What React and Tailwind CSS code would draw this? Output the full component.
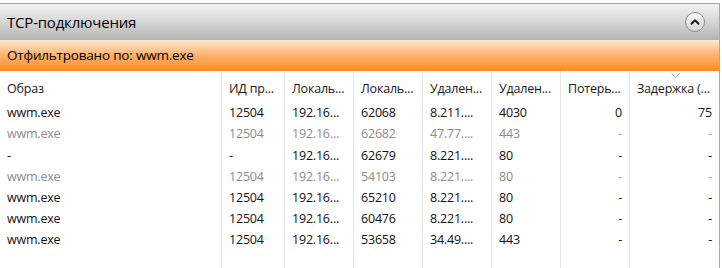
import { ChevronUp } from 'lucide-react';

const cols = [
  { label: 'Образ', w: 'w-[221px]', align: 'text-left' },
  { label: 'ИД пр...', w: 'w-[63px]', align: 'text-left' },
  { label: 'Локаль...', w: 'w-[69px]', align: 'text-left' },
  { label: 'Локаль...', w: 'w-[69px]', align: 'text-left' },
  { label: 'Удален...', w: 'w-[69px]', align: 'text-left' },
  { label: 'Удален...', w: 'w-[69px]', align: 'text-left' },
  { label: 'Потерь...', w: 'w-[69px]', align: 'text-right' },
  { label: 'Задержка (...', w: 'flex-1', align: 'text-right' },
];

const rows = [
  { dim: false, cells: ['wwm.exe', '12504', '192.16...', '62068', '8.211....', '4030', '0', '75'] },
  { dim: true, cells: ['wwm.exe', '12504', '192.16...', '62682', '47.77....', '443', '-', '-'] },
  { dim: false, cells: ['-', '-', '192.16...', '62679', '8.221....', '80', '-', '-'] },
  { dim: true, cells: ['wwm.exe', '12504', '192.16...', '54103', '8.221....', '80', '-', '-'] },
  { dim: false, cells: ['wwm.exe', '12504', '192.16...', '65210', '8.221....', '80', '-', '-'] },
  { dim: false, cells: ['wwm.exe', '12504', '192.16...', '60476', '8.221....', '80', '-', '-'] },
  { dim: false, cells: ['wwm.exe', '12504', '192.16...', '53658', '34.49....', '443', '-', '-'] },
];

export default function App() {
  return (
    <div
      className="w-[722px] h-[268px] bg-white overflow-hidden"
      style={{ fontFamily: '"Open Sans", "Noto Sans", sans-serif' }}
    >
      <div className="w-[720px] h-[268px] border-t border-t-[#a0a0a0] border-r border-r-[#a8a8a8] mt-[3px] flex flex-col">
        {/* Title bar */}
        <div className="h-[36px] flex items-center justify-between pl-[7px] pr-[14px] bg-gradient-to-b from-[#f2f2f2] via-[#d6d6d6] to-[#b4b4b4]">
          <span className="text-[15px] text-black tracking-[-0.2px]">TCP-подключения</span>
          <div className="w-[20px] h-[20px] rounded-full border border-[#8c8c8c] bg-gradient-to-b from-[#fafafa] to-[#d4d4d4] flex items-center justify-center">
            <ChevronUp size={14} strokeWidth={3.5} className="text-[#222]" />
          </div>
        </div>

        {/* Filter bar */}
        <div className="h-[31px] flex items-center pl-[7px] bg-gradient-to-b from-[#fde7cf] via-[#fdb16a] to-[#ff8a12]">
          <span className="text-[13.5px] text-black tracking-[-0.2px]">Отфильтровано по: wwm.exe</span>
        </div>

        {/* Table */}
        <div className="flex-1 flex flex-col text-[12.5px] tracking-[-0.2px]">
          <div className="h-[31px] flex">
            {cols.map((c, i) => (
              <div
                key={i}
                className={`${c.w} ${i > 0 ? 'border-l border-l-[#e6e6e6]' : ''} relative flex items-center pt-[5px] px-[7px] text-[#1a1a1a] whitespace-nowrap overflow-hidden`}
              >
                {i === 7 && (
                  <svg className="absolute left-[41px] top-[2px]" width="9" height="5" viewBox="0 0 9 5">
                    <path d="M0.5 0.5 L4.5 4.5 L8.5 0.5" fill="none" stroke="#a0a0a0" strokeWidth="1" />
                  </svg>
                )}
                <span>{c.label}</span>
              </div>
            ))}
          </div>
          <div className="flex-1 flex">
            {cols.map((c, i) => (
              <div
                key={i}
                className={`${c.w} ${i > 0 ? 'border-l border-l-[#e6e6e6]' : ''} flex flex-col pt-[1px]`}
              >
                {rows.map((r, j) => (
                  <div
                    key={j}
                    className={`h-[21.2px] flex items-center px-[7px] whitespace-nowrap ${
                      c.align === 'text-right' ? 'justify-end' : ''
                    } ${r.dim ? 'text-[#8c8c8c]' : 'text-[#111]'} ${
                      r.cells[i] === '-' && c.align === 'text-right' ? 'text-[#9a9a9a]' : ''
                    }`}
                  >
                    {r.cells[i]}
                  </div>
                ))}
              </div>
            ))}
          </div>
        </div>
      </div>
    </div>
  );
}
